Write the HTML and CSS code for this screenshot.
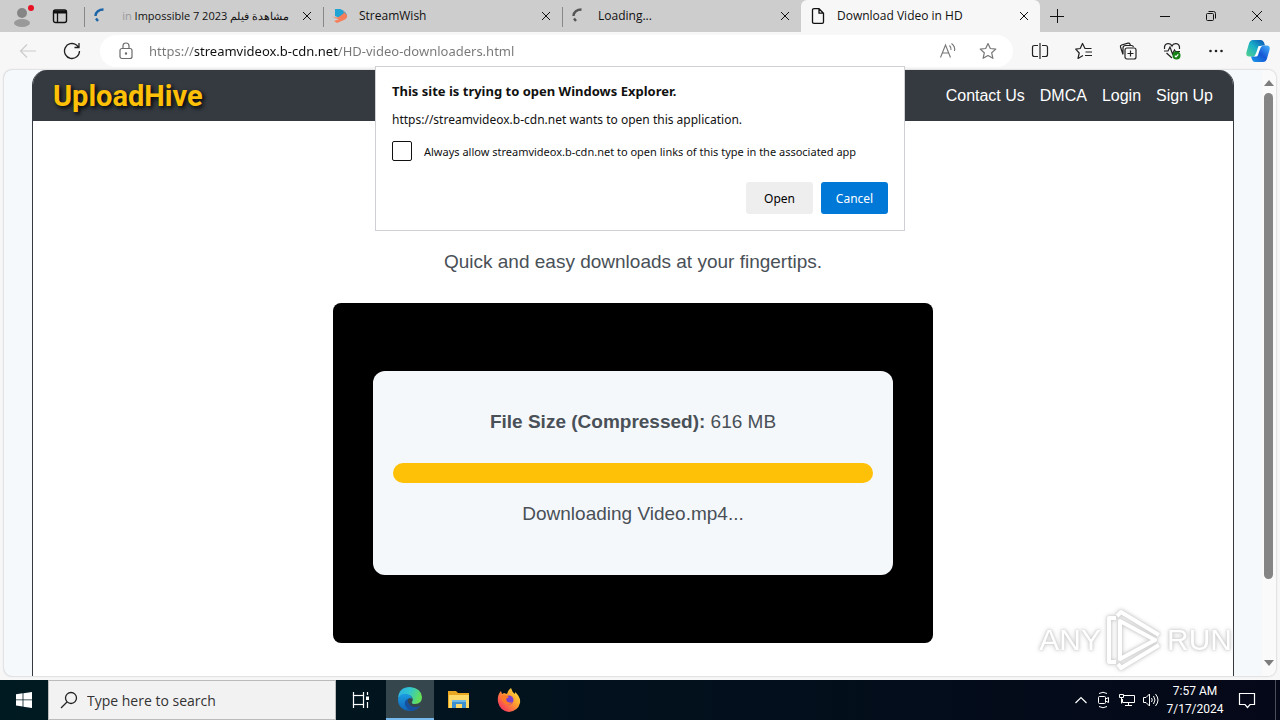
FILE: index.html
```html
<!DOCTYPE html>
<html lang="en">
<head>
  <meta charset="UTF-8">
  <meta name="viewport" content="width=device-width, initial-scale=1.0">
  <title>Download Video in HD</title>
  <link rel="stylesheet" href="styles.css">
</head>
<body>
  <div class="browser">
    <div class="tabbar">
      <div class="tabbar-start">
        <button class="icon-btn" aria-label="Profile">
          <svg width="24" height="24" viewBox="0 0 24 24"><circle cx="12" cy="9" r="5" fill="#858585"/><ellipse cx="12" cy="19" rx="8" ry="4" fill="#999"/><circle cx="21" cy="4" r="3" fill="#e81123"/></svg>
        </button>
        <button class="icon-btn" aria-label="Tab actions">
          <svg width="16" height="16" viewBox="0 0 16 16" fill="none" stroke="#111"><rect x="1.5" y="2" width="13" height="12.5" rx="2" stroke-width="1.4"/><path d="M1.5 4h13" stroke-width="3"/><path d="M5.5 4v10" stroke-width="1.3"/></svg>
        </button>
      </div>
      <div class="tab">
        <svg class="favicon" width="16" height="16" viewBox="0 0 16 16" fill="none" stroke="#1b64a8" stroke-width="2.400"><path d="M10.500 1.500C6 1.500 2.500 4 2.500 8M3 10.500l2 2.500"/></svg>
        <span class="tab-title tab-title-rtl" dir="rtl">مشاهدة فيلم <span class="faded">in</span> Impossible 7 2023</span>
        <button class="close" aria-label="Close tab"><svg width="10" height="10" viewBox="0 0 10 10" stroke="#111"><path d="M1 1l8 8M9 1L1 9"/></svg></button>
      </div>
      <div class="tab">
        <svg class="favicon" width="16" height="16" viewBox="0 0 16 16"><path d="M3 1h5q7 3 7 7l-5 3-7-3z" fill="#21a3d5"/><path d="M0 8q5 3 8 0t3-5l4 4q1 3-3 5l-7 3-3-2 6-2Q4 12 0 8z" fill="#f57e5b"/><path d="M3 1h5q3 1 4 4L8 8 3 7z" fill="#21a3d5"/></svg>
        <span class="tab-title">StreamWish</span>
        <button class="close" aria-label="Close tab"><svg width="10" height="10" viewBox="0 0 10 10" stroke="#111"><path d="M1 1l8 8M9 1L1 9"/></svg></button>
      </div>
      <div class="tab">
        <svg class="favicon" width="16" height="16" viewBox="0 0 16 16" fill="none" stroke="#555" stroke-width="2.400"><path d="M10.500 1.500C6 1.500 2.500 4 2.500 8M3 10.500l2 2.500"/></svg>
        <span class="tab-title">Loading...</span>
        <button class="close" aria-label="Close tab"><svg width="10" height="10" viewBox="0 0 10 10" stroke="#111"><path d="M1 1l8 8M9 1L1 9"/></svg></button>
      </div>
      <div class="tab tab-active">
        <svg class="favicon" width="16" height="16" viewBox="0 0 16 16" fill="none" stroke="#111" stroke-width="1.3"><path d="M2.500 2Q2.500 .7 4 .7h5l4.500 4.500V14q0 1.300-1.300 1.300H4Q2.500 15.300 2.500 14zM9 .7v4.500h4.500"/></svg>
        <span class="tab-title">Download Video in HD</span>
        <button class="close" aria-label="Close tab"><svg width="10" height="10" viewBox="0 0 10 10" stroke="#111"><path d="M1 1l8 8M9 1L1 9"/></svg></button>
      </div>
      <button class="icon-btn new-tab" aria-label="New tab"><svg width="14" height="14" viewBox="0 0 14 14" stroke="#111"><path d="M0 7.500h14M7.500 0v14"/></svg></button>
      <div class="window-buttons">
        <button class="icon-btn" aria-label="Minimize"><svg width="12" height="12" viewBox="0 0 12 12" stroke="#111"><path d="M1 6.500h10"/></svg></button>
        <button class="icon-btn" aria-label="Restore"><svg width="12" height="12" viewBox="0 0 12 12" fill="none" stroke="#111"><rect x="1.500" y="3.500" width="7" height="7" rx="1"/><path d="M3.500 1.500h5q2 0 2 2v5"/></svg></button>
        <button class="icon-btn" aria-label="Close"><svg width="12" height="12" viewBox="0 0 12 12" stroke="#111"><path d="M1 1l10 10M11 1L1 11"/></svg></button>
      </div>
    </div>

    <div class="toolbar">
      <button class="icon-btn" aria-label="Back"><svg width="18" height="18" viewBox="0 0 18 18" fill="none" stroke="#ccc" stroke-width="1.200"><path d="M17 9H1.500M8 2.500L1.500 9 8 15.500"/></svg></button>
      <button class="icon-btn" aria-label="Refresh"><svg width="18" height="18" viewBox="0 0 18 18" fill="none" stroke="#222" stroke-width="1.300"><path d="M16.500 9A7.500 7.500 0 1 1 13.500 3L16 5.500M16 1v4.500h-4.500"/></svg></button>
      <div class="address">
        <svg width="16" height="18" viewBox="0 0 16 18" fill="none" stroke="#6b6b6b" stroke-width="1.200"><rect x="2" y="6.500" width="12" height="10" rx="2"/><path d="M5 6.500V4q0-3 3-3t3 3v2.500"/><circle cx="8" cy="11.500" r=".6" fill="#6b6b6b"/></svg>
        <input class="url" type="text" aria-label="Address" value="https://streamvideox.b-cdn.net/HD-video-downloaders.html">
        <button class="icon-btn" aria-label="Read aloud"><svg width="18" height="18" viewBox="0 0 18 18" fill="none" stroke="#777" stroke-width="1.100"><path d="M1.500 15.500L6.500 3l5 12.500M3.300 11h6.400M10.500 3.500q2 2 1.500 4.500M12.500 1.500q4 3 3 7.500"/></svg></button>
        <button class="icon-btn" aria-label="Add to favorites"><svg width="18" height="18" viewBox="0 0 18 18" fill="none" stroke="#777" stroke-width="1.200" stroke-linejoin="round"><path d="M9 1.500l2.300 5 5.500.6-4.100 3.700 1.200 5.500L9 13.500l-4.900 2.800 1.200-5.500L1.200 7.100l5.500-.6z"/></svg></button>
      </div>
      <div class="tools">
        <button class="icon-btn" aria-label="Split screen"><svg width="18" height="18" viewBox="0 0 18 18" fill="none" stroke="#222" stroke-width="1.200"><path d="M7 3.500H3.500q-2 0-2 2v7q0 2 2 2H7M11 3.500h3.500q2 0 2 2v7q0 2-2 2H11M9 1v16"/></svg></button>
        <button class="icon-btn" aria-label="Favorites"><svg width="18" height="18" viewBox="0 0 18 18" fill="none" stroke="#222" stroke-width="1.200" stroke-linejoin="round"><path d="M16.500 6.500H10l-2.500-5-2.300 5-4.500.6L4.200 11l-1.200 5.500 5-3M10.500 10H17M10 13.500h7"/></svg></button>
        <button class="icon-btn" aria-label="Collections"><svg width="18" height="18" viewBox="0 0 18 18" fill="none" stroke="#222" stroke-width="1.200"><rect x="6" y="6" width="11" height="11" rx="2"/><path d="M11.500 8.500v6M8.500 11.500h6M4 12.500L1.500 5Q1 3.500 2.500 3L9 1.200q1.500-.4 2 1l.3 1.300M4 12V6q0-2.500 2.500-2.500h6q1.500 0 2 1.500"/></svg></button>
        <button class="icon-btn" aria-label="Browser essentials"><svg width="18" height="18" viewBox="0 0 18 18" fill="none" stroke="#222" stroke-width="1.200"><path d="M1.500 7Q1 2 5 1.700 8 1.500 9 4q1-2.500 4-2.300Q17 2 16.500 7M3.500 11L9 16M1 9h4l2-4 2.500 7L11.500 8l1 1.500H17"/><circle cx="13.500" cy="13.500" r="4" fill="#168116" stroke="none"/><path d="M11.800 13.600l1.200 1.200 2.300-2.500" stroke="#fff"/></svg></button>
        <button class="icon-btn" aria-label="Settings and more"><svg width="18" height="18" viewBox="0 0 18 18" fill="#222"><circle cx="3.500" cy="9" r="1.300"/><circle cx="9" cy="9" r="1.300"/><circle cx="14.500" cy="9" r="1.300"/></svg></button>
        <button class="icon-btn" aria-label="Copilot">
          <svg width="24" height="24" viewBox="0 0 24 24">
            <defs>
              <linearGradient id="cop-a" x1="0" y1="1" x2="1" y2="0"><stop offset="0" stop-color="#54d38a"/><stop offset=".5" stop-color="#1ab0c8"/><stop offset="1" stop-color="#0a4cb4"/></linearGradient>
              <linearGradient id="cop-b" x1="0" y1="1" x2="1" y2="0"><stop offset="0" stop-color="#1a9be8"/><stop offset=".5" stop-color="#1557d6"/><stop offset="1" stop-color="#48b4ff"/></linearGradient>
            </defs>
            <path d="M7 1h8q2 0 3 2.500l1 3h-3q-2 0-3 3l-2 6q-1 2-3 2H3Q-.5 17.500.5 13L3 4.500Q4 1 7 1z" fill="url(#cop-a)"/>
            <path d="M17 23H9q-2 0-3-2.500l-1-3h3q2 0 3-3l2-6q1-2 3-2h5q3.500 0 2.500 4.500L21 19.500Q20 23 17 23z" fill="url(#cop-b)"/>
            <path d="M12.500 7H16q-1.500 1-2.500 4.500L12 16q-.5 1.500-2 1.500H8Q9.500 16 10.500 13z" fill="#fff"/>
          </svg>
        </button>
      </div>
    </div>

    <div class="viewport">
      <div class="page">
        <header class="site-header">
          <a class="logo" href="#">UploadHive</a>
          <nav>
            <a href="#">Contact Us</a>
            <a href="#">DMCA</a>
            <a href="#">Login</a>
            <a href="#">Sign Up</a>
          </nav>
        </header>
        <main>
          <p class="tagline">Quick and easy downloads at your fingertips.</p>
          <div class="player">
            <div class="card">
              <p><strong>File Size (Compressed):</strong> 616 MB</p>
              <progress class="bar" value="100" max="100" aria-label="Download progress"></progress>
              <p>Downloading Video.mp4...</p>
            </div>
          </div>
        </main>
      </div>
      <div class="scrollbar">
        <svg width="10" height="6" viewBox="0 0 10 6" fill="#7d7d7d"><path d="M5 0l5 6H0z"/></svg>
        <div class="thumb"></div>
        <svg width="10" height="6" viewBox="0 0 10 6" fill="#7d7d7d"><path d="M5 6l5-6H0z"/></svg>
      </div>
    </div>

    <div class="dialog" role="dialog" aria-labelledby="dialogTitle">
      <h2 id="dialogTitle">This site is trying to open Windows Explorer.</h2>
      <p>https://streamvideox.b-cdn.net wants to open this application.</p>
      <div class="check-row">
        <input type="checkbox" id="alwaysAllow">
        <label for="alwaysAllow">Always allow streamvideox.b-cdn.net to open links of this type in the associated app</label>
      </div>
      <div class="dialog-buttons">
        <button class="btn">Open</button>
        <button class="btn btn-primary">Cancel</button>
      </div>
    </div>

    <div class="watermark">
      <span>ANY</span>
      <svg width="58" height="64" viewBox="0 0 58 64" fill="none" stroke="#fff" stroke-width="4" stroke-linejoin="round"><path d="M15 13v38l35-19zM11 54H4V10h7M12 8l4-4 38 23M13 56l3 4 38-23"/></svg>
      <span>RUN</span>
    </div>
  </div>

  <div class="taskbar">
    <button class="task-btn start" aria-label="Start"><svg width="16" height="16" viewBox="0 0 16 16" fill="#fff"><path d="M0 2.300L6.600 1.300v6.200H0zM7.400 1.200L16 0v7.500H7.400zM0 8.300h6.600v6.300L0 13.600zM7.400 8.300H16V16l-8.600-1.200z"/></svg></button>
    <div class="search">
      <svg width="18" height="18" viewBox="0 0 18 18" fill="none" stroke="#222" stroke-width="1.300"><circle cx="11" cy="7" r="5.500"/><path d="M7 11l-6 6"/></svg>
      <input type="text" placeholder="Type here to search" aria-label="Type here to search">
    </div>
    <button class="task-btn" aria-label="Task view"><svg width="18" height="18" viewBox="0 0 18 18" fill="none" stroke="#fff" stroke-width="1.200"><path d="M1.500 1v3.500h10V1M1.500 17v-3.500h10V17M15.500 1v3M15.500 11v6"/><rect x="1.500" y="4.500" width="10" height="9"/><path d="M15.500 5.500v3.500" stroke-width="3"/></svg></button>
    <button class="task-btn task-active" aria-label="Microsoft Edge">
      <svg width="26" height="26" viewBox="0 0 26 26">
        <defs>
          <linearGradient id="edge-a" x1="0" y1="0" x2="1" y2=".3"><stop offset="0" stop-color="#2baee6"/><stop offset=".5" stop-color="#31c5d0"/><stop offset="1" stop-color="#63df5b"/></linearGradient>
          <linearGradient id="edge-b" x1="0" y1="0" x2="0" y2="1"><stop offset="0" stop-color="#1b9de2"/><stop offset="1" stop-color="#0f62b7"/></linearGradient>
        </defs>
        <path d="M1 12Q2 1 13 1q11 1 12 10 0 7-7 7-4 0-3-2 2-3-1-6-5-4-13 2z" fill="url(#edge-a)"/>
        <path d="M1 13Q3 7 10 8q5 1 5 5-2-2-4 0-2 4 2 7 5 3 10 0-4 5-10 5Q1 24 1 13z" fill="url(#edge-b)"/>
        <path d="M11 13q-4 1-3 6 2 5 7 6 5-1 8-5-5 2-9 0-4-3-3-7z" fill="#17509c"/>
      </svg>
    </button>
    <button class="task-btn" aria-label="File Explorer"><svg width="22" height="20" viewBox="0 0 22 20"><path d="M0 1h8l2 2h11v15H0z" fill="#eaa722"/><path d="M1 5h20v13H1z" fill="#ffda68"/><path d="M4 10h14v8h-4v-4H8v4H4z" fill="#3d91cf"/><path d="M4 10h14v2H4z" fill="#6eb9e6"/></svg></button>
    <button class="task-btn" aria-label="Firefox">
      <svg width="24" height="24" viewBox="0 0 24 24">
        <defs><linearGradient id="fox" x1="1" y1="0" x2="0" y2="1"><stop offset="0" stop-color="#fff14a"/><stop offset=".4" stop-color="#ffa52c"/><stop offset="1" stop-color="#f5186a"/></linearGradient></defs>
        <path d="M1 14Q0 7 4 3l1 3 2-1 3 1q1-4 4-6 1 4 4 6V4q6 5 5 11-2 8-11 9Q3 23 1 14z" fill="url(#fox)"/>
        <circle cx="12" cy="12" r="4.500" fill="#7b3fce"/>
        <path d="M4 8q4-2 8 1l-3 2q1 5 7 3-4 5-9 1-3-3-3-7z" fill="#ff7a26"/>
      </svg>
    </button>
    <div class="tray">
      <svg width="12" height="8" viewBox="0 0 12 8" fill="none" stroke="#fff" stroke-width="1.200"><path d="M.5 7L6 1.500 11.500 7"/></svg>
      <svg width="16" height="18" viewBox="0 0 16 18" fill="none" stroke="#fff"><rect x="3.500" y="5.500" width="7" height="7" rx="1"/><path d="M10.500 8l3-1.500v5l-3-1.500M4 2.500q4-2.500 8 0M4 15.500q4 2.500 8 0"/></svg>
      <svg width="16" height="16" viewBox="0 0 16 16" fill="none" stroke="#fff"><path d="M5 3.500h10.500v7H3.500V7M9.500 10.500v3M6 13.500h7M.5 2.500h4v3h-4zM2.500 5.500v6"/></svg>
      <svg width="16" height="16" viewBox="0 0 16 16" fill="none" stroke="#fff"><path d="M.5 5.500H3L6.500 2v12L3 10.500H.5zM8.500 6q1.500 2 0 4M10.500 4q3 4 0 8M12.500 2q5 6 0 12"/></svg>
      <div class="clock"><span>7:57 AM</span><span>7/17/2024</span></div>
      <svg class="notify" width="18" height="18" viewBox="0 0 18 18" fill="none" stroke="#fff" stroke-width="1.200"><path d="M1.500 2.500h15v11H12l-2.500 3-2.500-3H1.500z"/></svg>
    </div>
  </div>
</body>
</html>
```

FILE: styles.css
```css
* {
  box-sizing: border-box;
  margin: 0;
  padding: 0;
}
body {
  display: flex;
  flex-direction: column;
  height: 100vh;
  overflow: hidden;
  background-color: #f7f7f7;
  color: #111;
  font-family: 'Open Sans', 'Noto Sans', sans-serif;
  font-size: 12px;
}
button, input {
  font-family: inherit;
  font-size: inherit;
  border: none;
  background: none;
}
a {
  text-decoration: none;
}
svg {
  display: block;
  flex-shrink: 0;
}
.icon-btn {
  display: flex;
  align-items: center;
  justify-content: center;
  flex-shrink: 0;
}

/* browser frame */
.browser {
  position: relative;
  flex: 1;
  min-height: 0;
  display: flex;
  flex-direction: column;
}
.tabbar {
  display: flex;
  height: 32px;
  background-color: #cdcdcd;
}
.tabbar-start {
  display: flex;
  align-items: center;
  gap: 18px;
  width: 84px;
  padding-left: 10px;
}
.tab {
  flex: 0 1 239px;
  min-width: 0;
  display: flex;
  align-items: center;
  gap: 11px;
  padding: 0 9px;
  background: linear-gradient(#888, #888) 0 60% / 1px 20px no-repeat;
}
.tab-active {
  background: #f7f7f7;
  border-radius: 6px 6px 0 0;
}
.tab-title {
  flex: 1;
  white-space: nowrap;
  overflow: hidden;
  line-height: 18px;
}
.tab-title-rtl {
  font-size: 11px;
}
.faded {
  color: #999;
}
.close {
  padding: 2px;
}
.new-tab {
  width: 34px;
}
.window-buttons {
  display: flex;
  margin-left: auto;
}
.window-buttons .icon-btn {
  width: 46px;
}
.toolbar {
  display: flex;
  align-items: center;
  height: 38px;
  padding: 0 10px 0 19px;
  gap: 26px;
}
.address {
  flex: 1;
  display: flex;
  align-items: center;
  gap: 15px;
  height: 32px;
  margin-left: -7px;
  padding: 0 16px 0 18px;
  border-radius: 16px;
  background-color: #fff;
}
.address .icon-btn + .icon-btn {
  margin-left: 7px;
}
.url {
  flex: 1;
  min-width: 0;
  height: 24px;
  font-family: 'Noto Sans', sans-serif;
  font-size: 13px;
  /* dims the scheme and the path, keeps the host dark */
  background: linear-gradient(90deg, #767676 46px, #111 46px 189px, #767676 189px);
  background-clip: text;
  -webkit-background-clip: text;
  color: transparent;
}
.tools {
  display: flex;
  align-items: center;
  gap: 26px;
  margin-left: -8px;
}
.tools .icon-btn:last-child {
  margin-left: -5px;
}

/* web page */
.viewport {
  flex: 1;
  min-height: 0;
  display: flex;
  margin: 0 4px 4px;
  padding-left: 28px;
  border-radius: 8px;
  background-color: #f5f9fc;
  box-shadow: 0 0 2px #aaa;
  overflow: hidden;
}
.page {
  flex: 1;
  margin-right: 28px;
  border: 1px solid #343a40;
  border-width: 0 1px;
  border-radius: 15px 15px 0 0;
  background-color: #fff;
  overflow: hidden;
}
.site-header {
  display: flex;
  align-items: center;
  justify-content: space-between;
  height: 51px;
  padding: 0 20px;
  background-color: #343a40;
}
.logo {
  font-family: Roboto, sans-serif;
  font-size: 29px;
  font-weight: 700;
  color: #ffc107;
  text-shadow: 2px 2px 4px #000;
}
.site-header nav {
  display: flex;
  gap: 15px;
}
.site-header nav a {
  font-family: 'Liberation Sans', Arial, sans-serif;
  font-size: 16px;
  line-height: 20px;
  color: #fff;
}
main {
  padding: 126px 20px 0;
  font-family: 'Liberation Sans', Arial, sans-serif;
  font-size: 19px;
  line-height: 30px;
  color: #495057;
  text-align: center;
}
.tagline {
  margin-bottom: 26px;
}
.player {
  display: flex;
  align-items: center;
  max-width: 600px;
  height: 340px;
  margin: 0 auto;
  padding: 0 40px;
  border-radius: 8px;
  background-color: #000;
}
.card {
  flex: 1;
  padding: 36px 20px 46px;
  border-radius: 12px;
  background-color: #f5f8fb;
}
.bar {
  display: block;
  appearance: none;
  -webkit-appearance: none;
  width: 100%;
  height: 20px;
  margin: 26px 0 16px;
  border: none;
  border-radius: 10px;
  overflow: hidden;
}
.bar::-webkit-progress-bar {
  background-color: #e0e0e0;
}
.bar::-webkit-progress-value {
  background-color: #ffc107;
}
.scrollbar {
  display: flex;
  flex-direction: column;
  align-items: center;
  justify-content: space-between;
  width: 14px;
  padding: 10px 1px 10px 0;
  background-color: #fafafa;
}
.thumb {
  width: 9px;
  height: 83%;
  margin: 7px 0 auto;
  border-radius: 5px;
  background-color: #858585;
}

/* permission prompt, hangs over the page */
.dialog {
  position: absolute;
  top: 66px;
  left: 50%;
  transform: translateX(-50%);
  width: 530px;
  padding: 15px 16px 16px;
  border: 1px solid #cfcfd4;
  background-color: #fff;
  font-family: 'Noto Sans', sans-serif;
}
.dialog h2 {
  font-size: 13px;
  line-height: 18px;
}
.dialog p {
  margin-top: 11px;
  line-height: 18px;
}
.check-row {
  display: flex;
  align-items: center;
  gap: 12px;
  margin-top: 12px;
  font-size: 11px;
}
.check-row input {
  appearance: none;
  -webkit-appearance: none;
  width: 20px;
  height: 20px;
  border: 1px solid #111;
  border-radius: 2px;
}
.dialog-buttons {
  display: flex;
  justify-content: flex-end;
  gap: 8px;
  margin-top: 21px;
}
.btn {
  min-width: 67px;
  height: 32px;
  border-radius: 3px;
  background-color: #eee;
  font-size: 12px;
}
.btn-primary {
  background-color: #0078d7;
  color: #fff;
}

.watermark {
  position: absolute;
  right: 48px;
  bottom: 8px;
  display: flex;
  align-items: center;
  gap: 4px;
  font-family: 'Liberation Sans', sans-serif;
  font-size: 30px;
  color: #fff;
  filter: drop-shadow(0 0 1px #ccc) drop-shadow(0 0 2px #ccc);
}

/* taskbar */
.taskbar {
  display: flex;
  height: 40px;
  background: linear-gradient(90deg, #001a22, #050818);
  color: #fff;
}
.task-btn {
  display: flex;
  align-items: center;
  justify-content: center;
  width: 50px;
}
.start, .task-active {
  width: 48px;
}
.task-active {
  border-bottom: 2px solid #76b9ed;
  background-color: #36464d;
}
.search {
  display: flex;
  align-items: center;
  gap: 9px;
  width: 288px;
  padding: 0 11px;
  border: 1px solid #bbb;
  background-color: #f2f2f2;
}
.search input {
  flex: 1;
  min-width: 0;
  font-size: 14px;
}
.search input::placeholder {
  color: #333;
}
.tray {
  display: flex;
  align-items: center;
  gap: 8px;
  margin: 0 4px 0 auto;
  padding-right: 19px;
  border-right: 1px solid #4a4f5a;
}
.clock {
  display: flex;
  flex-direction: column;
  align-items: center;
  width: 56px;
  line-height: 18px;
  font-family: Roboto, sans-serif;
}
.notify {
  margin-left: 7px;
}
```
